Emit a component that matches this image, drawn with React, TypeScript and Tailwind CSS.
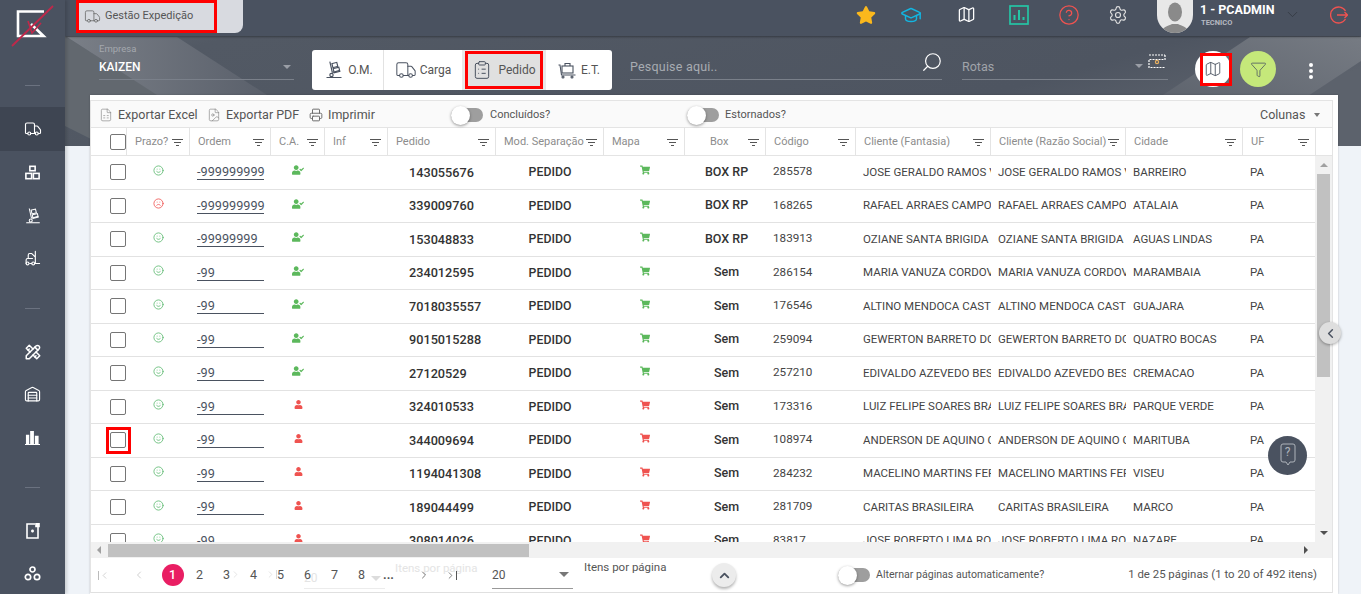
import React from "react";
import { Truck, GraduationCap, Map as MapIcon, CircleHelp, Settings, ChevronDown, ChevronUp, ChevronLeft, ChevronRight, Search, Funnel, Printer, Smile, Frown, ClipboardList, Forklift, Warehouse, FileSpreadsheet, FileImage } from "lucide-react";
import { FaStar, FaUserCheck, FaUser, FaShoppingCart } from "react-icons/fa";
import { TbTools } from "react-icons/tb";

const grid = "grid grid-cols-[36px_63px_81px_54px_63px_108px_108px_81px_81px_90px_135px_135px_117px_73px]";

const headers = ["Prazo?", "Ordem", "C.A.", "Inf", "Pedido", "Mod. Separação", "Mapa", "Box", "Código", "Cliente (Fantasia)", "Cliente (Razão Social)", "Cidade", "UF"];

const rows = [
  { ok: true, ordem: "-999999999", ca: true, ped: "143055676", box: "BOX RP", cod: "285578", cli: "JOSE GERALDO RAMOS VIEIRA", cid: "BARREIRO" },
  { ok: false, ordem: "-999999999", ca: true, ped: "339009760", box: "BOX RP", cod: "168265", cli: "RAFAEL ARRAES CAMPOS", cid: "ATALAIA" },
  { ok: true, ordem: "-99999999", ca: true, ped: "153048833", box: "BOX RP", cod: "183913", cli: "OZIANE SANTA BRIGIDA", cid: "AGUAS LINDAS" },
  { ok: true, ordem: "-99", ca: true, ped: "234012595", box: "Sem", cod: "286154", cli: "MARIA VANUZA CORDOVIL", cid: "MARAMBAIA" },
  { ok: true, ordem: "-99", ca: true, ped: "7018035557", box: "Sem", cod: "176546", cli: "ALTINO MENDOCA CASTRO", cid: "GUAJARA" },
  { ok: true, ordem: "-99", ca: true, ped: "9015015288", box: "Sem", cod: "259094", cli: "GEWERTON BARRETO DOS", cid: "QUATRO BOCAS" },
  { ok: true, ordem: "-99", ca: true, ped: "27120529", box: "Sem", cod: "257210", cli: "EDIVALDO AZEVEDO BESERRA", cid: "CREMACAO" },
  { ok: true, ordem: "-99", ca: false, ped: "324010533", box: "Sem", cod: "173316", cli: "LUIZ FELIPE SOARES BRAGA", cid: "PARQUE VERDE" },
  { ok: true, ordem: "-99", ca: false, ped: "344009694", box: "Sem", cod: "108974", cli: "ANDERSON DE AQUINO COSTA", cid: "MARITUBA", mark: true },
  { ok: true, ordem: "-99", ca: false, ped: "1194041308", box: "Sem", cod: "284232", cli: "MACELINO MARTINS FERREIRA", cid: "VISEU" },
  { ok: true, ordem: "-99", ca: false, ped: "189044499", box: "Sem", cod: "281709", cli: "CARITAS BRASILEIRA", cid: "MARCO" },
  { ok: true, ordem: "-99", ca: false, ped: "308014026", box: "Sem", cod: "83817", cli: "JOSE ROBERTO LIMA ROCHA", cid: "NAZARE" },
];

function FilterLines() {
  return (
    <svg width="11" height="9" viewBox="0 0 11 9" className="shrink-0 text-[#555]" stroke="currentColor" strokeWidth="1">
      <path d="M0 1.5h11M2 4.5h7M4 7.5h3" />
    </svg>
  );
}

function Toggle() {
  return (
    <div className="flex h-[14px] w-[32px] items-center rounded-full bg-[#9e9e9e]">
      <div className="h-[19px] w-[19px] shrink-0 rounded-full bg-white shadow-[0_1px_3px_rgba(0,0,0,0.4)]" />
    </div>
  );
}

function HandTruck({ className }: { className?: string }) {
  return (
    <svg viewBox="0 0 24 24" fill="none" stroke="currentColor" strokeWidth="1.4" className={className}>
      <path d="M7 2l3 13" />
      <path d="M3 21h18" />
      <rect x="10" y="3.5" width="6" height="5" transform="rotate(-14 13 6)" />
      <rect x="11.5" y="9.5" width="7" height="5" transform="rotate(-14 15 12)" />
      <path d="M10 15l9-2.5" />
      <circle cx="9" cy="18" r="2" />
    </svg>
  );
}

function Logo() {
  return (
    <svg width="46" height="46" viewBox="0 0 46 46" fill="none">
      <path d="M34 6.500H8V31H33.500L21 19" stroke="#fff" strokeWidth="2.600" />
      <path d="M43 1L2 41" stroke="#c0284a" strokeWidth="1.800" />
      <path d="M18 16l4 12 9-10" stroke="#c0284a" strokeWidth="1.600" />
    </svg>
  );
}

function NavIcon({ children, active }: { children: React.ReactNode; active?: boolean }) {
  return <div className={`flex shrink-0 items-center justify-center text-white ${active ? "h-[44px] bg-[#3e4552]" : "h-[43px]"}`}>{children}</div>;
}

function Divider() {
  return <div className="mx-auto h-px w-[15px] shrink-0 bg-[#6b7280]" />;
}

function Sidebar() {
  return (
    <aside className="z-20 flex w-[65px] shrink-0 flex-col overflow-hidden bg-[#4a5260] shadow-[2px_0_3px_rgba(0,0,0,0.15)]">
      <div className="flex h-[85px] shrink-0 justify-center pt-[5px]"><Logo /></div>
      <Divider />
      <div className="mt-[21px] shrink-0">
        <NavIcon active><Truck size={18} strokeWidth={1.5} /></NavIcon>
        <NavIcon>
          <svg width="15" height="15" viewBox="0 0 17 17" fill="none" stroke="#fff" strokeWidth="1.800"><rect x="5.500" y="1.500" width="6" height="5" /><rect x="1" y="9.500" width="6.500" height="6" /><rect x="9.500" y="9.500" width="6.500" height="6" /></svg>
        </NavIcon>
        <NavIcon><HandTruck className="h-[18px] w-[18px]" /></NavIcon>
        <NavIcon><Forklift size={17} strokeWidth={1.6} /></NavIcon>
      </div>
      <div className="mt-[28px] shrink-0"><Divider /></div>
      <div className="mt-[21px] shrink-0">
        <NavIcon><TbTools size={18} /></NavIcon>
        <NavIcon><Warehouse size={17} strokeWidth={1.6} /></NavIcon>
        <NavIcon>
          <svg width="15" height="15" viewBox="0 0 16 16" fill="#fff"><path d="M1 15V5h3.500v10zM5.500 15V1h4v14zM10.500 15V6h4v9zM0 15h16v1H0z" /></svg>
        </NavIcon>
      </div>
      <div className="mt-[28px] shrink-0"><Divider /></div>
      <div className="mt-[21px] shrink-0">
        <NavIcon>
          <svg width="14" height="16" viewBox="0 0 14 16" fill="none" stroke="#fff" strokeWidth="1.600"><path d="M9 1H1v14h11V4" /><path d="M5 8h3M6.500 6.500v3" /><path d="M10 0.500h3v3h-3z" fill="#fff" /></svg>
        </NavIcon>
        <NavIcon>
          <svg width="17" height="15" viewBox="0 0 17 15" fill="none" stroke="#fff" strokeWidth="1.700"><circle cx="8.500" cy="3.500" r="2.500" /><circle cx="4" cy="11" r="2.700" /><circle cx="13" cy="11" r="2.700" /></svg>
        </NavIcon>
      </div>
    </aside>
  );
}

function TopBar() {
  return (
    <header className="relative z-10 flex h-[36px] shrink-0 items-start bg-[#4a5260] shadow-[0_1px_2px_rgba(0,0,0,0.35)]">
      <div className="ml-[11px] h-[33px] w-[167px] rounded-br-[8px] bg-[#d8dae0]">
        <div className="flex h-[33px] w-[141px] items-center border-[3px] border-[#f00] pl-[5px] text-[11px] text-[#555]">
          <Truck size={17} strokeWidth={1.1} className="text-[#666]" />
          <span className="ml-[4px]">Gestão Expedição</span>
        </div>
      </div>
      <div className="ml-auto flex h-[29px] items-center">
        <FaStar size={20} className="mr-[24px] text-[#fbb81c]" />
        <GraduationCap size={22} strokeWidth={1.6} className="mr-[35px] text-[#13b5e0]" />
        <MapIcon size={19} strokeWidth={1.6} className="mr-[33px] text-white" />
        <svg width="20" height="20" viewBox="0 0 20 20" fill="none" stroke="#25c5a5" strokeWidth="1.700" className="mr-[29px]"><rect x="1" y="1" width="18" height="18" /><path d="M5.500 15V10M10 15V5M14.500 15v-3" strokeWidth="2" /></svg>
        <CircleHelp size={22} strokeWidth={1.4} className="mr-[28px] text-[#ef5350]" />
        <Settings size={20} strokeWidth={1.4} className="mr-[29px] text-[#e0e0e0]" />
        <div className="h-[33px] w-[36px] self-start overflow-hidden rounded-b-full bg-[#e8e8e8]">
          <svg viewBox="0 0 36 36" className="h-[36px] w-[36px]" fill="#8a8a8a"><ellipse cx="18" cy="12" rx="7" ry="9.500" /><path d="M3 36c1-9 8-10 12-12h6c4 2 11 3 12 12z" /></svg>
        </div>
        <div className="ml-[7px] flex w-[84px] flex-col">
          <span className="text-[12.500px] leading-[15px] font-bold text-white">1 - PCADMIN</span>
          <span className="mt-[1px] pl-[1px] text-[7.500px] leading-[9px] font-bold text-[#b5b9c0]">TECNICO</span>
        </div>
        <ChevronDown size={17} strokeWidth={1} className="text-[#2f343c]" />
        <svg width="18" height="18" viewBox="0 0 18 18" fill="none" stroke="#ef5350" strokeWidth="1.300" className="mr-[13px] ml-[29px]"><path d="M15.500 5A8 8 0 1 0 15.500 13" /><path d="M7 9h10.500M14.500 6l3 3-3 3" /></svg>
      </div>
    </header>
  );
}

function UnderField({ className, children }: { className: string; children: React.ReactNode }) {
  return <div className={`flex items-center border-b border-[#7a808a] ${className}`}>{children}</div>;
}

function Caret({ className = "" }: { className?: string }) {
  return <span className={`block h-0 w-0 border-x-[4px] border-t-[4px] border-x-transparent border-t-[#9a9ea6] ${className}`} />;
}

function FilterBar() {
  return (
    <div className="relative flex h-[59px] shrink-0 items-start">
      <div className="mt-[7px] ml-[34px] w-[195px]">
        <div className="text-[9.500px] leading-[12px] text-[#a4a8ae]">Empresa</div>
        <UnderField className="h-[25px] justify-between pr-[3px]">
          <span className="text-[12px] leading-[14px] font-medium text-white">KAIZEN</span>
          <Caret />
        </UnderField>
      </div>
      <div className="mt-[14px] ml-[18px] flex h-[40px] w-[300px] overflow-hidden rounded-[3px] bg-white text-[12px] text-[#555]">
        <div className="flex w-[72px] items-center justify-center gap-[4px] border-r border-[#e2e2e2] pl-[2px]">
          <HandTruck className="h-[20px] w-[20px] text-[#4a5260]" />
          <span>O.M.</span>
        </div>
        <div className="flex w-[78px] items-center justify-center gap-[3px]">
          <Truck size={22} strokeWidth={1.1} className="text-[#4a5260]" />
          <span>Carga</span>
        </div>
        <div className="w-[84px] bg-[#e8e8e8] px-[3px] py-px">
          <div className="flex h-full items-center justify-center gap-[6px] border-[3px] border-[#f00] bg-[#e0e0e0]">
            <ClipboardList size={20} strokeWidth={1.2} className="text-[#4a5260]" />
            <span>Pedido</span>
          </div>
        </div>
        <div className="flex w-[66px] items-center justify-center gap-[5px]">
          <svg width="18" height="18" viewBox="0 0 18 18" fill="none" stroke="#4a5260" strokeWidth="1.100"><path d="M0.500 4h1.500l1.500 10h14" /><rect x="4" y="5" width="11" height="7" /><path d="M7 5V2.500h5V5" /><circle cx="5" cy="16" r="1" /><circle cx="14" cy="16" r="1" /></svg>
          <span>E.T.</span>
        </div>
      </div>
      <UnderField className="mt-[7px] ml-[18px] h-[37px] w-[312px] justify-between">
        <span className="mt-[12px] text-[12.500px] tracking-[0.2px] text-[#a8acb2]">Pesquise aqui..</span>
        <Search size={22} strokeWidth={1.3} className="mt-[1px] mr-[-1px] -scale-x-100 text-white" />
      </UnderField>
      <UnderField className="mt-[7px] ml-[20px] h-[37px] w-[206px]">
        <span className="mt-[12px] text-[12.500px] text-[#a0a4aa]">Rotas</span>
        <Caret className="mt-[10px] ml-auto" />
        <svg width="18" height="18" viewBox="0 0 18 18" fill="none" stroke="#fff" strokeWidth="1.200" strokeDasharray="2 1" className="mt-[2px] mr-[2px] ml-[5px]"><path d="M1 2h16M17 2v4.500H1v8h16" /><circle cx="9" cy="9" r="1.600" stroke="#e8b060" strokeDasharray="0" /></svg>
      </UnderField>
      <div className="relative mt-[15px] ml-[27px] flex h-[36px] w-[36px] items-center justify-center rounded-full bg-white">
        <MapIcon size={18} strokeWidth={1.2} className="text-[#4a5260]" />
        <div className="absolute top-[2px] left-[5px] h-[33px] w-[32px] border-[3px] border-[#f00]" />
      </div>
      <div className="mt-[15px] ml-[9px] flex h-[36px] w-[36px] items-center justify-center rounded-full bg-[#c5e87a]">
        <Funnel size={17} strokeWidth={1.1} className="text-[#4a5260]" />
      </div>
      <div className="mt-[27px] ml-[33px] flex flex-col gap-[2px]">
        <span className="h-[4px] w-[4px] rounded-full bg-white" />
        <span className="h-[4px] w-[4px] rounded-full bg-white" />
        <span className="h-[4px] w-[4px] rounded-full bg-white" />
      </div>
    </div>
  );
}

function Toolbar() {
  return (
    <div className="flex h-[27px] items-center border-b border-[#e4e4e4] bg-[#fafafa] pt-[2px] text-[12.500px] whitespace-nowrap text-[#555]">
      <FileSpreadsheet size={14} strokeWidth={1} className="ml-[8px] text-[#777]" />
      <span className="ml-[5px] w-[80px]">Exportar Excel</span>
      <FileImage size={14} strokeWidth={1} className="ml-[9px] text-[#777]" />
      <span className="ml-[5px] w-[74px]">Exportar PDF</span>
      <Printer size={14} strokeWidth={1.6} className="ml-[9px] text-[#666]" />
      <span className="ml-[5px] w-[48px]">Imprimir</span>
      <div className="ml-[75px]"><Toggle /></div>
      <span className="ml-[7px] w-[197px] text-[11px]">Concluídos?</span>
      <Toggle />
      <span className="ml-[6px] w-[535px] text-[11px]">Estornados?</span>
      <span>Colunas</span>
      <span className="ml-[9px] h-0 w-0 border-x-[3.500px] border-t-[4px] border-x-transparent border-t-[#777]" />
    </div>
  );
}

function HeaderRow() {
  return (
    <div className="flex h-[28px] border-b border-[#e4e4e4]">
      <div className={grid}>
        <div className="flex items-center border-r border-[#e4e4e4] pl-[19px]">
          <div className="h-[16px] w-[16px] shrink-0 rounded-[2px] border border-[#757575]" />
        </div>
        {headers.map((h) => (
          <div key={h} className="flex items-center justify-between border-r border-[#e4e4e4] pt-[1px] pr-[6px] pl-[8px] text-[11px] whitespace-nowrap text-[#8c8c8c]">
            <span className={h === "Box" ? "ml-[17px]" : ""}>{h}</span>
            <FilterLines />
          </div>
        ))}
      </div>
      <div className="w-[17px]" />
    </div>
  );
}

function Row({ r }: { r: (typeof rows)[number] }) {
  return (
    <div className={`${grid} h-[33.500px] items-center border-b border-[#e2e2e2]`}>
      <div className="pl-[19px]">
        <div className="relative h-[16px] w-[16px] rounded-[2px] border border-[#757575]">
          {r.mark && <div className="absolute -top-[6px] -left-[5px] h-[27px] w-[25px] border-[3px] border-[#f00]" />}
        </div>
      </div>
      <div className="flex justify-center pb-[4px]">
        {r.ok ? <Smile size={11} strokeWidth={1.8} className="text-[#5cb870]" /> : <Frown size={11} strokeWidth={1.8} className="text-[#ef5350]" />}
      </div>
      <div className="pl-[7px]">
        <div className="w-[67px] border-b border-[#4a5260] text-[12.700px] leading-[15px] text-[#4a5260]">{r.ordem}</div>
      </div>
      <div className="flex justify-center pb-[4px]">
        {r.ca ? <FaUserCheck size={12} className="text-[#5cb85c]" /> : <FaUser size={9} className="text-[#ef5350]" />}
      </div>
      <div />
      <div className="pl-[21px] text-[12.700px] font-medium text-[#333]">{r.ped}</div>
      <div className="text-center text-[12.300px] font-medium text-[#333]">PEDIDO</div>
      <div className="flex justify-center pb-[4px]">
        <FaShoppingCart size={10} className={r.ca ? "text-[#5cb85c]" : "text-[#ef5350]"} />
      </div>
      <div className="pl-[2px] text-center text-[12.500px] font-medium text-[#333]">{r.box}</div>
      <div className="pl-[7px] text-[11.700px] text-[#444]">{r.cod}</div>
      <div className="overflow-hidden pl-[7px] text-[11.500px] whitespace-nowrap text-[#444]">{r.cli}</div>
      <div className="overflow-hidden pl-[7px] text-[11.500px] whitespace-nowrap text-[#444]">{r.cli}</div>
      <div className="overflow-hidden pl-[7px] text-[11.500px] whitespace-nowrap text-[#444]">{r.cid}</div>
      <div className="pl-[7px] text-[11.500px] text-[#444]">PA</div>
    </div>
  );
}

function Body() {
  return (
    <div className="flex h-[402px] flex-col">
      <div className="flex h-[386px]">
        <div className="h-[386px] w-[1225px] overflow-hidden">
          {rows.map((r, i) => <Row key={i} r={r} />)}
        </div>
        <div className="flex w-[17px] flex-col items-center bg-[#f1f1f1]">
          <span className="mt-[7px] h-0 w-0 border-x-[4px] border-b-[4px] border-x-transparent border-b-[#a0a0a0]" />
          <div className="mt-[7px] h-[203px] w-[13px] bg-[#c1c1c1]" />
          <span className="mt-auto mb-[7px] h-0 w-0 border-x-[4px] border-t-[4px] border-x-transparent border-t-[#505050]" />
        </div>
      </div>
      <div className="flex h-[16px] items-center bg-[#f1f1f1]">
        <span className="ml-[6px] h-0 w-0 border-y-[4px] border-r-[4px] border-y-transparent border-r-[#a0a0a0]" />
        <div className="ml-[7px] h-[13px] w-[421px] bg-[#c1c1c1]" />
        <span className="mr-[24px] ml-auto h-0 w-0 border-y-[4px] border-l-[4px] border-y-transparent border-l-[#505050]" />
      </div>
    </div>
  );
}

function PageCell({ children, className = "" }: { children: React.ReactNode; className?: string }) {
  return <div className={`flex h-[27px] w-[27px] shrink-0 items-center justify-center text-[12.500px] text-[#555] ${className}`}>{children}</div>;
}

function Footer() {
  return (
    <div className="relative flex h-[35px] items-center border-b border-[#e0e0e0] text-[#555]">
      <div className="absolute top-[2px] left-[304px] text-[11.500px] whitespace-nowrap text-[#e4e4e4]">Itens por página</div>
      <div className="absolute top-[10px] left-[213px] flex h-[21px] w-[81px] items-center justify-between border-b border-[#ececec] pr-[4px] text-[12px] text-[#e4e4e4]">
        <span>20</span>
        <span className="h-0 w-0 border-x-[5px] border-t-[5px] border-x-transparent border-t-[#dcdcdc]" />
      </div>
      <ChevronRight size={11} strokeWidth={1.4} className="absolute top-[11px] left-[139px] text-[#d8d8d8]" />
      <div className="absolute top-[11px] left-[174px] flex items-center text-[#d8d8d8]">
        <ChevronRight size={11} strokeWidth={1.4} />
        <span className="h-[9px] w-px bg-[#d8d8d8]" />
      </div>
      <div className="relative flex w-full items-center">
        <PageCell className="ml-[-1px] text-[#bbb]"><span className="h-[9px] w-px bg-[#bbb]" /><ChevronLeft size={11} strokeWidth={1.4} /></PageCell>
        <PageCell className="ml-[8px]"><ChevronLeft size={12} strokeWidth={1.4} className="text-[#bbb]" /></PageCell>
        <PageCell className="ml-[7px]"><span className="flex h-[22px] w-[22px] items-center justify-center rounded-full bg-[#e91e63] font-medium text-white">1</span></PageCell>
        <PageCell>2</PageCell>
        <PageCell>3</PageCell>
        <PageCell>4</PageCell>
        <PageCell>5</PageCell>
        <PageCell>6</PageCell>
        <PageCell>7</PageCell>
        <PageCell>8</PageCell>
        <PageCell className="font-bold">...</PageCell>
        <PageCell className="ml-[8px]"><ChevronRight size={12} strokeWidth={1.6} /></PageCell>
        <PageCell><ChevronRight size={11} strokeWidth={1.6} /><span className="h-[9px] w-px bg-[#555]" /></PageCell>
        <div className="ml-[28px] flex h-[27px] w-[81px] items-center justify-between border-b border-[#999] pr-[4px] text-[12px]">
          <span>20</span>
          <span className="h-0 w-0 border-x-[5px] border-t-[5px] border-x-transparent border-t-[#777]" />
        </div>
        <span className="mb-[15px] ml-[11px] w-[83px] text-[11.500px] whitespace-nowrap">Itens por página</span>
        <div className="ml-[45px] flex h-[24px] w-[24px] items-center justify-center rounded-full bg-[#ececec] shadow-[0_2px_3px_rgba(0,0,0,0.3)]">
          <ChevronUp size={15} strokeWidth={3} className="text-[#4a5260]" />
        </div>
        <div className="ml-[102px]"><Toggle /></div>
        <span className="ml-[6px] text-[10.600px]">Alternar páginas automaticamente?</span>
        <span className="mr-[15px] ml-auto text-[11.400px]">1 de 25 páginas (1 to 20 of 492 itens)</span>
      </div>
    </div>
  );
}

function Card() {
  return (
    <section className="relative ml-[25px] w-[1248px] flex-1 bg-white pt-[5px] pr-[5px] pl-px shadow-[0_0_2px_rgba(0,0,0,0.2)]">
      <div className="-ml-px border-x border-t border-[#e4e4e4]">
        <Toolbar />
        <HeaderRow />
        <Body />
        <Footer />
      </div>
    </section>
  );
}

export default function App() {
  return (
    <div className="flex h-screen w-full overflow-hidden bg-[#eff3f8] font-['Roboto',sans-serif]">
      <Sidebar />
      <main className="relative flex min-w-0 flex-1 flex-col">
        <TopBar />
        <div className="relative flex min-h-0 flex-1 flex-col">
          <svg className="absolute top-0 left-0 h-[110px] w-full" viewBox="0 0 1296 110" preserveAspectRatio="none">
            <defs>
              <linearGradient id="a" x1="0" x2="1" y1="0" y2="0.3">
                <stop offset="0" stopColor="#5e646e" />
                <stop offset="0.12" stopColor="#525964" />
                <stop offset="0.8" stopColor="#4e5561" />
                <stop offset="1" stopColor="#5c626c" />
              </linearGradient>
              <linearGradient id="b" x1="0" x2="1" y1="0" y2="0">
                <stop offset="0" stopColor="#7a7f87" />
                <stop offset="1" stopColor="#5a606b" />
              </linearGradient>
              <linearGradient id="c" x1="0" x2="1" y1="1" y2="0">
                <stop offset="0" stopColor="#5a606a" />
                <stop offset="1" stopColor="#767b83" />
              </linearGradient>
            </defs>
            <rect width="1296" height="110" fill="url(#a)" />
            <path d="M0 0L150 95L280 110H40L0 90z" fill="#62686f" />
            <path d="M2 1H112L202 59H92z" fill="url(#b)" />
            <path d="M1095 61L1185 1H1296V25L1205 85z" fill="url(#c)" />
          </svg>
          <FilterBar />
          <Card />
          <div className="absolute top-[286px] right-[20px] z-20 flex h-[22px] w-[22px] items-center justify-center rounded-full bg-[#dedede] shadow-[0_1px_3px_rgba(0,0,0,0.35)]">
            <ChevronLeft size={15} strokeWidth={2.4} className="text-[#4a5260]" />
          </div>
          <div className="absolute top-[400px] left-[1203px] z-20 flex h-[39px] w-[39px] items-center justify-center rounded-full bg-[#4a5260]">
            <svg width="16" height="24" viewBox="0 0 16 24" fill="none" stroke="#aeb3ba" strokeWidth="1" className="absolute top-[7px] left-[11.500px]"><path d="M3 1h10a2 2 0 0 1 2 2v14a2 2 0 0 1-2 2h-3l-2 3-2-3H3a2 2 0 0 1-2-2V3a2 2 0 0 1 2-2z" /></svg>
            <span className="absolute top-[9px] text-[12px] leading-[14px] text-[#aeb3ba]">?</span>
          </div>
        </div>
      </main>
    </div>
  );
}
